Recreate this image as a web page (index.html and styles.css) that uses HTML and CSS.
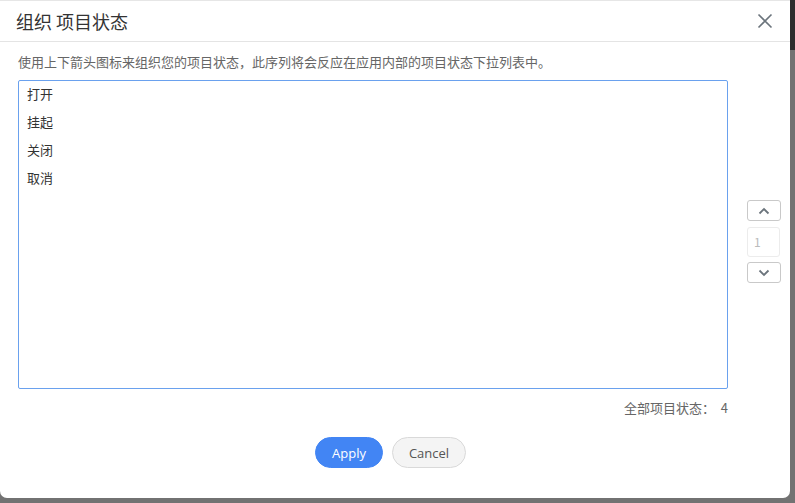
FILE: index.html
```html
<!DOCTYPE html>
<html lang="zh-CN">
<head>
    <meta charset="UTF-8">
    <meta name="viewport" content="width=device-width, initial-scale=1.0">
    <title>组织 项目状态</title>
    <link rel="stylesheet" href="styles.css">
</head>
<body>
    <div class="dialog">
        <div class="dialog-header">
            <h1 class="dialog-title">组织 项目状态</h1>
            <button class="close-btn" aria-label="关闭">
                <svg width="16" height="16" viewBox="0 0 16 16">
                    <path d="M1.5 1.5 L14.5 14.5 M14.5 1.5 L1.5 14.5" stroke="#6b747c" stroke-width="1.6" fill="none"/>
                </svg>
            </button>
        </div>
        <div class="dialog-body">
            <p class="hint">使用上下箭头图标来组织您的项目状态，此序列将会反应在应用内部的项目状态下拉列表中。</p>
            <div class="sorter">
                <ul class="status-list">
                    <li>打开</li>
                    <li>挂起</li>
                    <li>关闭</li>
                    <li>取消</li>
                </ul>
                <div class="order-ctrl">
                    <button class="arrow-btn">
                        <svg width="12" height="8" viewBox="0 0 12 8"><path d="M1.5 6.5 L6 2 L10.5 6.5" stroke="#6b747c" stroke-width="1.8" fill="none"/></svg>
                    </button>
                    <div class="pos-box">1</div>
                    <button class="arrow-btn">
                        <svg width="12" height="8" viewBox="0 0 12 8"><path d="M1.5 1.5 L6 6 L10.5 1.5" stroke="#6b747c" stroke-width="1.8" fill="none"/></svg>
                    </button>
                </div>
            </div>
            <div class="total">全部项目状态：&nbsp; 4</div>
        </div>
        <div class="dialog-footer">
            <button class="btn btn-primary">Apply</button>
            <button class="btn btn-default">Cancel</button>
        </div>
    </div>
</body>
</html>
```

FILE: styles.css
```css
*{
    margin: 0;
    padding: 0;
    box-sizing: border-box;
}
body{
    background: linear-gradient(to bottom, #2e2e2e 0, #2e2e2e 50px, #727272 50px);
    font-family: "Noto Sans CJK SC", "Open Sans", sans-serif;
    width: 795px;
    height: 503px;
    overflow: hidden;
}
.dialog{
    width: 790px;
    height: 498px;
    background-color: #fff;
    border-top: 1px solid #e6e6e6;
    border-radius: 0 0 7px 7px;
    display: flex;
    flex-direction: column;
}
.dialog-header{
    height: 41px;
    border-bottom: 1px solid #e4e4e4;
    display: flex;
    align-items: center;
    justify-content: space-between;
    padding: 0 17px 0 16px;
}
.dialog-title{
    font-size: 18px;
    font-weight: normal;
    color: #333;
    line-height: 24px;
    margin-top: -1px;
}
.close-btn{
    background: none;
    border: none;
    width: 16px;
    height: 16px;
    display: flex;
    cursor: pointer;
}
.dialog-body{
    padding: 0 9px 0 18px;
}
.hint{
    font-size: 13px;
    color: #666;
    line-height: 18px;
    margin-top: 11px;
}
.sorter{
    display: flex;
    margin-top: 9px;
}
.status-list{
    list-style: none;
    flex-shrink: 0;
    width: 710px;
    height: 309px;
    border: 1px solid #6aa1ee;
    border-radius: 2px;
    padding: 4px 8px;
}
.status-list li{
    font-size: 13px;
    color: #333;
    line-height: 18px;
    margin-bottom: 10px;
}
.order-ctrl{
    margin-left: 19px;
    padding-top: 120px;
    display: flex;
    flex-direction: column;
    gap: 5px;
}
.arrow-btn{
    width: 34px;
    height: 21px;
    border: 1px solid #c9c9c9;
    border-radius: 3px;
    background: #fff;
    display: flex;
    align-items: center;
    justify-content: center;
    cursor: pointer;
}
.pos-box{
    width: 33px;
    height: 30px;
    margin-top: 1px;
    border: 1px solid #ececec;
    border-radius: 3px;
    font-size: 12px;
    color: #bbb;
    line-height: 28px;
    padding-left: 6px;
}
.total{
    width: 710px;
    text-align: right;
    font-size: 13px;
    color: #666;
    line-height: 18px;
    margin-top: 10px;
}
.dialog-footer{
    display: flex;
    justify-content: center;
    gap: 9px;
    margin-top: 20px;
    padding-right: 9px;
}
.btn{
    height: 31px;
    border-radius: 16px;
    font-family: "Open Sans", "Noto Sans CJK SC", sans-serif;
    font-size: 13px;
    cursor: pointer;
}
.btn-primary{
    width: 68px;
    background-color: #4285f4;
    border: 1px solid #4285f4;
    color: #fff;
}
.btn-default{
    width: 74px;
    background-color: #f4f4f4;
    border: 1px solid #d9d9d9;
    color: #555;
}
```
